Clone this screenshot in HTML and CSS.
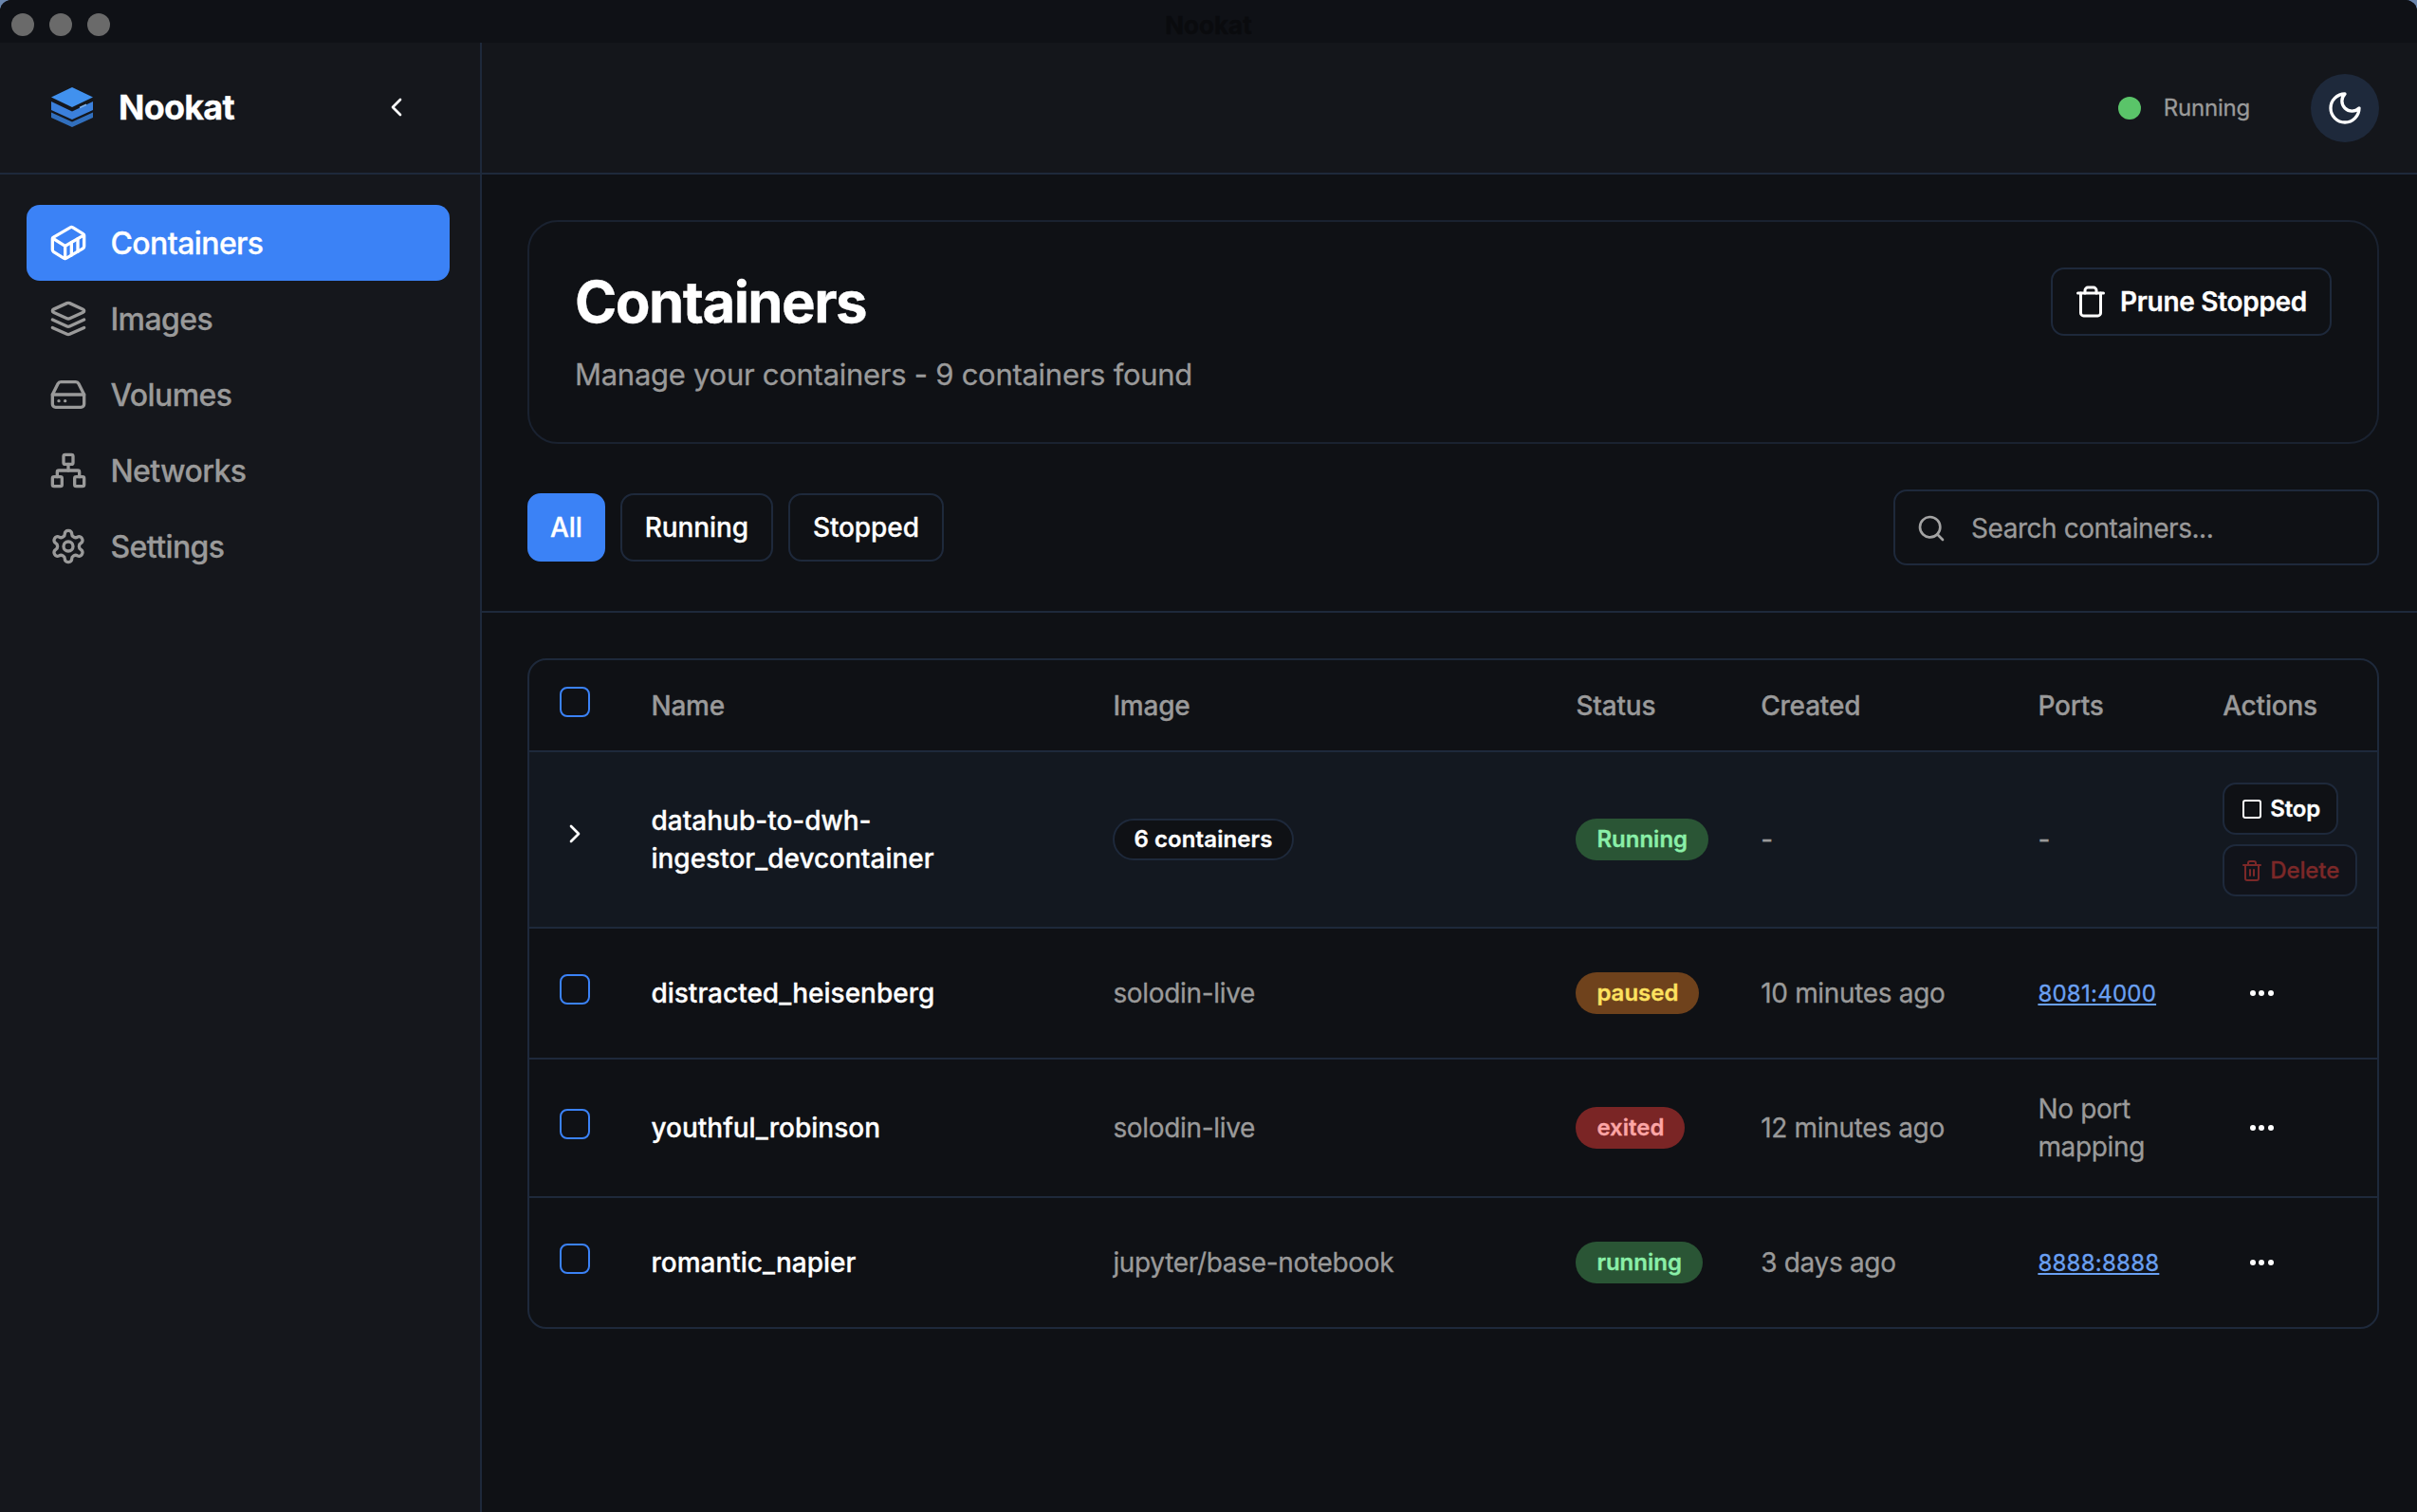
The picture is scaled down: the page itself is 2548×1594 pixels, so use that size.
FILE: index.html
```html
<!DOCTYPE html>
<html lang="en">
<head>
<meta charset="utf-8">
<title>Nookat</title>
<link rel="stylesheet" href="styles.css">
</head>
<body>
<div class="window">
  <div class="titlebar">
    <div class="lights"><span class="light"></span><span class="light"></span><span class="light"></span></div>
    <div class="window-title">Nookat</div>
    <div class="lights-spacer"></div>
  </div>
  <div class="app">
    <aside class="sidebar">
      <div class="brand">
        <div class="brand-left">
          <svg class="logo" viewBox="0 0 44 42"><path d="M22 0 44 10.500 22 21 0 10.500Z" fill="#4191ee"/><path d="M0 15 22 25.500 44 15V24L22 34 0 24Z" fill="#3b80dc"/><path d="M30 21.500 37 18.200" stroke="#7fb2ee" stroke-width="1.500" fill="none"/><path d="M0 26.500 22 36.500 44 26.500V32L22 42 0 32Z" fill="#316fbd"/></svg>
          <span class="brand-name">Nookat</span>
        </div>
        <svg class="icon chev" viewBox="0 0 24 24"><path d="m15 18-6-6 6-6"/></svg>
      </div>
      <nav class="nav">
        <a class="nav-item active"><svg class="icon nav-icon" viewBox="0 0 24 24"><path d="M22 7.700c0-.6-.4-1.200-.8-1.500l-6.300-3.900a1.720 1.720 0 0 0-1.700 0l-10.300 6c-.5.2-.9.800-.9 1.400v6.600c0 .5.400 1.200.8 1.500l6.300 3.900a1.720 1.720 0 0 0 1.700 0l10.300-6c.5-.3.900-1 .9-1.500Z"/><path d="M10 21.900V14L2.100 9.100"/><path d="m10 14 11.900-6.900"/><path d="M14 19.800v-8.100"/><path d="M18 17.500V9.400"/></svg>Containers</a>
        <a class="nav-item"><svg class="icon nav-icon" viewBox="0 0 24 24"><path d="m12.830 2.180a2 2 0 0 0-1.660 0L2.600 6.080a1 1 0 0 0 0 1.830l8.580 3.910a2 2 0 0 0 1.660 0l8.580-3.900a1 1 0 0 0 0-1.830Z"/><path d="m22 17.650-9.170 4.160a2 2 0 0 1-1.660 0L2 17.650"/><path d="m22 12.650-9.170 4.160a2 2 0 0 1-1.660 0L2 12.650"/></svg>Images</a>
        <a class="nav-item"><svg class="icon nav-icon" viewBox="0 0 24 24"><path d="M22 12H2"/><path d="M5.450 5.110 2 12v6a2 2 0 0 0 2 2h16a2 2 0 0 0 2-2v-6l-3.450-6.890A2 2 0 0 0 16.760 4H7.240a2 2 0 0 0-1.790 1.110z"/><path d="M6 16h.01"/><path d="M10 16h.01"/></svg>Volumes</a>
        <a class="nav-item"><svg class="icon nav-icon" viewBox="0 0 24 24"><rect x="16" y="16" width="6" height="6" rx="1"/><rect x="2" y="16" width="6" height="6" rx="1"/><rect x="9" y="2" width="6" height="6" rx="1"/><path d="M5 16v-3a1 1 0 0 1 1-1h12a1 1 0 0 1 1 1v3"/><path d="M12 12V8"/></svg>Networks</a>
        <a class="nav-item"><svg class="icon nav-icon" viewBox="0 0 24 24"><path d="M12.220 2h-.44a2 2 0 0 0-2 2v.18a2 2 0 0 1-1 1.730l-.43.25a2 2 0 0 1-2 0l-.15-.08a2 2 0 0 0-2.730.73l-.22.38a2 2 0 0 0 .73 2.730l.15.1a2 2 0 0 1 1 1.720v.51a2 2 0 0 1-1 1.740l-.15.09a2 2 0 0 0-.73 2.730l.22.38a2 2 0 0 0 2.730.73l.15-.08a2 2 0 0 1 2 0l.43.25a2 2 0 0 1 1 1.730V20a2 2 0 0 0 2 2h.44a2 2 0 0 0 2-2v-.18a2 2 0 0 1 1-1.730l.43-.25a2 2 0 0 1 2 0l.15.08a2 2 0 0 0 2.730-.73l.22-.39a2 2 0 0 0-.73-2.730l-.15-.08a2 2 0 0 1-1-1.740v-.5a2 2 0 0 1 1-1.740l.15-.09a2 2 0 0 0 .73-2.730l-.22-.38a2 2 0 0 0-2.730-.73l-.15.08a2 2 0 0 1-2 0l-.43-.25a2 2 0 0 1-1-1.730V4a2 2 0 0 0-2-2z"/><circle cx="12" cy="12" r="3"/></svg>Settings</a>
      </nav>
    </aside>
    <main class="main">
      <header class="topbar">
        <span class="dot"></span>
        <span class="engine">Running</span>
        <button class="theme"><svg class="icon moon" viewBox="0 0 24 24"><path d="M12 3a6 6 0 0 0 9 9 9 9 0 1 1-9-9Z"/></svg></button>
      </header>
      <section class="page-head">
        <div class="card">
          <div>
            <h1 class="title">Containers</h1>
            <p class="subtitle">Manage your containers - 9 containers found</p>
          </div>
          <button class="prune"><svg class="icon trash" viewBox="0 0 24 24"><path d="M3 6h18"/><path d="M19 6v14c0 1-1 2-2 2H7c-1 0-2-1-2-2V6"/><path d="M8 6V4c0-1 1-2 2-2h4c1 0 2 1 2 2v2"/></svg>Prune Stopped</button>
        </div>
        <div class="filters">
          <div class="filter-group">
            <button class="filter on">All</button>
            <button class="filter">Running</button>
            <button class="filter">Stopped</button>
          </div>
          <div class="search"><svg class="icon search-icon" viewBox="0 0 24 24"><circle cx="11" cy="11" r="8"/><path d="m21 21-4.300-4.300"/></svg><span>Search containers...</span></div>
        </div>
      </section>
      <section class="table-wrap">
        <table class="table">
          <colgroup><col class="c-select"><col class="c-name"><col class="c-image"><col class="c10"><col class="c15"><col class="c10"><col class="c10"></colgroup>
          <thead>
            <tr><th><span class="check"></span></th><th>Name</th><th>Image</th><th>Status</th><th>Created</th><th>Ports</th><th>Actions</th></tr>
          </thead>
          <tbody>
            <tr class="group">
              <td><svg class="icon expand" viewBox="0 0 24 24"><path d="m9 18 6-6-6-6"/></svg></td>
              <td class="name">datahub-to-dwh-<br>ingestor_devcontainer</td>
              <td><span class="count">6 containers</span></td>
              <td><span class="badge green">Running</span></td>
              <td>-</td>
              <td>-</td>
              <td>
                <div class="act-stack">
                  <button class="act"><svg class="icon act-icon" viewBox="0 0 24 24"><rect x="3" y="3" width="18" height="18" rx="2"/></svg>Stop</button>
                  <button class="act danger"><svg class="icon act-icon" viewBox="0 0 24 24"><path d="M3 6h18"/><path d="M19 6v14c0 1-1 2-2 2H7c-1 0-2-1-2-2V6"/><path d="M8 6V4c0-1 1-2 2-2h4c1 0 2 1 2 2v2"/><path d="M10 11v6"/><path d="M14 11v6"/></svg>Delete</button>
                </div>
              </td>
            </tr>
            <tr>
              <td><span class="check"></span></td>
              <td class="name">distracted_heisenberg</td>
              <td>solodin-live</td>
              <td><span class="badge amber">paused</span></td>
              <td>10 minutes ago</td>
              <td><a class="port">8081:4000</a></td>
              <td><button class="more"><span></span><span></span><span></span></button></td>
            </tr>
            <tr>
              <td><span class="check"></span></td>
              <td class="name">youthful_robinson</td>
              <td>solodin-live</td>
              <td><span class="badge red">exited</span></td>
              <td>12 minutes ago</td>
              <td>No port mapping</td>
              <td><button class="more"><span></span><span></span><span></span></button></td>
            </tr>
            <tr>
              <td><span class="check"></span></td>
              <td class="name">romantic_napier</td>
              <td>jupyter/base-notebook</td>
              <td><span class="badge green">running</span></td>
              <td>3 days ago</td>
              <td><a class="port">8888:8888</a></td>
              <td><button class="more"><span></span><span></span><span></span></button></td>
            </tr>
          </tbody>
        </table>
      </section>
    </main>
  </div>
</div>
</body>
</html>
```
FILE: styles.css
```css
* { box-sizing: border-box; }
html, body { margin: 0; height: 100%; }
body { background: #6b86ad; font-family: Inter, "Noto Sans", sans-serif; color: #fff; overflow: hidden; }
button { font-family: inherit; color: inherit; cursor: pointer; }

.window { height: 1594px; display: flex; flex-direction: column; background: #0f1115; border-radius: 12px 12px 0 0; overflow: hidden; -webkit-text-stroke: 0.3px; }

.titlebar { height: 45px; flex: none; background: #0f1116; display: flex; align-items: center; justify-content: space-between; padding: 7px 12px 0; }
.lights { display: flex; gap: 16px; width: 200px; }
.lights-spacer { width: 200px; }
.light { width: 24px; height: 24px; border-radius: 50%; background: #6a6a6a; }
.window-title { font-size: 26px; color: #0a0b0e; font-weight: 700; }

.app { flex: 1; display: flex; min-height: 0; }

.sidebar { width: 508px; flex: none; background: #15171c; border-right: 2px solid #1e293b; }
.brand { height: 139px; border-bottom: 2px solid #1e293b; display: flex; align-items: center; justify-content: space-between; padding: 0 72px 2px 54px; }
.brand-left { display: flex; align-items: center; gap: 27px; }
.logo { width: 44px; height: 42px; }
.brand-name { font-size: 36px; font-weight: 700; letter-spacing: -0.8px; }

.icon { fill: none; stroke: currentColor; stroke-width: 2; stroke-linecap: round; stroke-linejoin: round; flex: none; display: block; }
.chev { width: 32px; height: 32px; color: #fff; }

.nav { padding: 32px 32px 0 28px; display: flex; flex-direction: column; }
.nav-item { height: 80px; display: flex; align-items: center; gap: 24.500px; padding-left: 24px; border-radius: 14px; font-size: 32px; font-weight: 500; letter-spacing: -0.6px; color: #9a9a9a; }
.nav-item.active { background: #3b82f6; color: #fff; }
.nav-icon { width: 40px; height: 40px; }

.main { flex: 1; min-width: 0; display: flex; flex-direction: column; }
.topbar { height: 139px; flex: none; background: #14161b; border-bottom: 2px solid #1e293b; display: flex; align-items: center; justify-content: flex-end; padding-right: 40px; }
.dot { width: 24px; height: 24px; border-radius: 50%; background: #5ac469; margin-right: 24px; }
.engine { font-size: 24px; letter-spacing: -0.2px; color: #9a9a9a; margin-right: 64px; }
.theme { width: 72px; height: 72px; border: 0; border-radius: 50%; background: #1e293b; display: flex; align-items: center; justify-content: center; padding: 0; }
.moon { width: 40px; height: 40px; }

.page-head { padding: 48px 40px 48px 48px; border-bottom: 2px solid #1e293b; }
.card { border: 2px solid #1a2230; border-radius: 32px; padding: 48px; display: flex; justify-content: space-between; align-items: flex-start; }
.title { margin: 0 0 16px; font-size: 60px; line-height: 72px; font-weight: 700; letter-spacing: -1.6px; }
.subtitle { margin: 0; padding-top: 2px; font-size: 31px; line-height: 46px; letter-spacing: -0.27px; color: #9a9a9a; }
.prune { height: 72px; display: flex; align-items: center; gap: 13px; padding: 0 24px 0 22px; background: transparent; border: 2px solid #1e293b; border-radius: 14px; font-size: 28px; font-weight: 600; letter-spacing: -0.3px; }
.trash { width: 36px; height: 36px; }

.filters { display: flex; justify-content: space-between; align-items: center; margin-top: 48px; }
.filter-group { display: flex; gap: 16px; }
.filter { height: 72px; padding: 0 24px; background: transparent; border: 2px solid #1e293b; border-radius: 14px; font-size: 28px; font-weight: 500; letter-spacing: -0.1px; }
.filter.on { background: #3b82f6; border-color: #3b82f6; padding: 0 22px; }
.search { width: 512px; height: 80px; border: 2px solid #1e293b; border-radius: 14px; display: flex; align-items: center; gap: 26px; padding: 2px 0 0 22px; font-size: 28px; letter-spacing: -0.45px; color: #9a9a9a; }
.search-icon { width: 32px; height: 32px; color: #a3a3a3; }

.table-wrap { padding: 48px 40px 0 48px; }
.table { width: 100%; table-layout: fixed; border-collapse: separate; border-spacing: 0; border: 2px solid #1e293b; border-radius: 20px; font-size: 28px; line-height: 40px; letter-spacing: -0.33px; color: #9a9a9a; }
.c-select { width: 4.95%; } .c-name { width: 25%; } .c-image { width: 25.05%; } .c10 { width: 10%; } .c15 { width: 15%; }
th { padding: 27.500px 32px; text-align: left; font-weight: 500; letter-spacing: -0.2px; color: #9a9a9a; border-bottom: 2px solid #1e293b; }
td { padding: 32px; vertical-align: middle; border-bottom: 2px solid #1e293b; }
tbody tr:last-child td { border-bottom: 0; }
.group td { background: #131820; }
td.name { font-weight: 500; letter-spacing: 0; color: #fff; }

.check { display: block; width: 32px; height: 32px; border: 2.500px solid #3b82f6; border-radius: 8px; margin-bottom: 8px; }
.expand { width: 32px; height: 32px; color: #fff; margin-bottom: 12px; }

.count { display: inline-block; height: 44px; line-height: 40px; padding: 0 20px; border: 2px solid #1e293b; border-radius: 22px; font-size: 24px; font-weight: 600; letter-spacing: 0.1px; color: #fff; background: #0f1115; }
.badge { display: inline-block; height: 44px; line-height: 44px; padding: 0 22px; border-radius: 22px; font-size: 24px; font-weight: 600; letter-spacing: 0; }
.green { background: #2a5535; color: #8aefa8; }
.amber { background: #6f421c; color: #fde15f; }
.red { background: #7a2525; color: #fca5a5; }

.port { font-size: 24px; letter-spacing: 0.25px; color: #6aa0f2; text-decoration: underline; }

.act-stack { display: flex; flex-direction: column; align-items: flex-start; gap: 10px; }
.act { height: 55px; display: flex; align-items: center; gap: 7px; padding: 0 17px; border: 2px solid #1e293b; border-radius: 14px; background: #0f1115; font-size: 24px; font-weight: 600; letter-spacing: -0.1px; color: #fff; }
.act-icon { width: 24px; height: 24px; }
.danger { color: #7b2828; font-weight: 500; background: #11131a; }

.more { width: 52px; height: 72px; border: 0; background: transparent; padding: 0; display: flex; align-items: center; justify-content: center; gap: 3.500px; margin-left: 15px; }
.more span { width: 6px; height: 6px; border-radius: 50%; background: #fff; }
```
